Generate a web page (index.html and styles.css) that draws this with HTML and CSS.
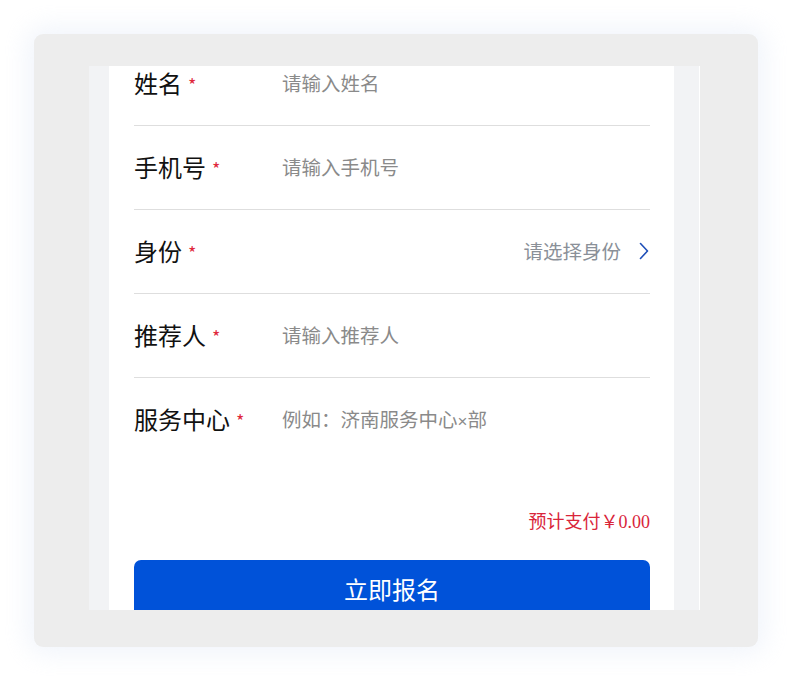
FILE: index.html
```html
<!DOCTYPE html>
<html lang="zh-CN">
<head>
<meta charset="utf-8">
<link rel="stylesheet" href="styles.css">
</head>
<body>
<div class="stage">
  <div class="panel">
    <div class="screen">
      <div class="strip strip-left"></div>
      <div class="main">
        <div class="form">
          <div class="row">
            <div class="label">姓名<span class="req">*</span></div>
            <div class="ph">请输入姓名</div>
          </div>
          <div class="row">
            <div class="label">手机号<span class="req">*</span></div>
            <div class="ph">请输入手机号</div>
          </div>
          <div class="row">
            <div class="label">身份<span class="req">*</span></div>
            <div class="select">
              <span class="select-text">请选择身份</span>
              <svg class="chev" width="10" height="18" viewBox="0 0 10 18"><path d="M1.5 1.5 L8.5 9 L1.5 16.5" fill="none" stroke="#1f4fb8" stroke-width="1.6" stroke-linecap="round" stroke-linejoin="round"/></svg>
            </div>
          </div>
          <div class="row">
            <div class="label">推荐人<span class="req">*</span></div>
            <div class="ph">请输入推荐人</div>
          </div>
          <div class="row last">
            <div class="label">服务中心<span class="req">*</span></div>
            <div class="ph">例如：济南服务中心<span class="times">×</span>部</div>
          </div>
        </div>
        <div class="pay">预计支付￥0.00</div>
        <div class="btn">立即报名</div>
      </div>
      <div class="strip strip-right"></div>
      <div class="edge"></div>
    </div>
  </div>
</div>
</body>
</html>
```

FILE: styles.css
```css
* { box-sizing: border-box; }
html, body { margin: 0; padding: 0; background: #ffffff; }
body { font-family: "Noto Sans CJK SC", "Noto Sans", sans-serif; }

.stage { padding: 34px; width: 792px; height: 682px; }

.panel {
  width: 724px;
  height: 613px;
  background: #ededed;
  border-radius: 9px;
  padding: 32px 58px 37px 55px;
  box-shadow: 0 0 26px 6px rgba(218, 228, 245, 0.4);
}

.screen {
  display: flex;
  height: 544px;
  overflow: hidden;
}

.strip { background: #f2f3f5; flex: none; }
.strip-left { width: 20px; }
.strip-right { width: 25px; }
.edge { width: 1px; background: #ffffff; flex: none; }

.main {
  width: 565px;
  flex: none;
  background: #ffffff;
  padding: 0 24px 0 25px;
}

.form { margin-top: -24px; }

.row {
  height: 84px;
  border-bottom: 1px solid #dedede;
  display: flex;
  align-items: center;
  padding-bottom: 1px;
}
.row.last { border-bottom: none; height: 83px; }

.label {
  width: 148px;
  flex: none;
  font-size: 24px;
  color: #111111;
  display: flex;
  align-items: center;
  line-height: 1;
}
.req {
  color: #e0283c;
  font-size: 18px;
  margin-left: 6px;
  position: relative;
  top: 1px;
}

.ph {
  font-size: 19.5px;
  color: #8a8a8a;
  line-height: 1;
}
.times {
  font-family: "Liberation Sans", sans-serif;
  font-size: 17px;
}

.select {
  flex: 1;
  display: flex;
  justify-content: flex-end;
  align-items: center;
  gap: 18px;
}
.select-text {
  font-size: 19.5px;
  color: #8a9098;
  line-height: 1;
}
.chev { display: block; margin-right: 1px; }

.pay {
  margin-top: 50px;
  text-align: right;
  font-family: "Liberation Serif", "Noto Sans CJK SC", serif;
  font-size: 18px;
  color: #d9253a;
  line-height: 22px;
}

.btn {
  margin-top: 27px;
  height: 62px;
  background: #0052d9;
  border-radius: 7px;
  color: #ffffff;
  font-size: 24px;
  display: flex;
  justify-content: center;
  align-items: center;
  padding-bottom: 6px;
}
```
